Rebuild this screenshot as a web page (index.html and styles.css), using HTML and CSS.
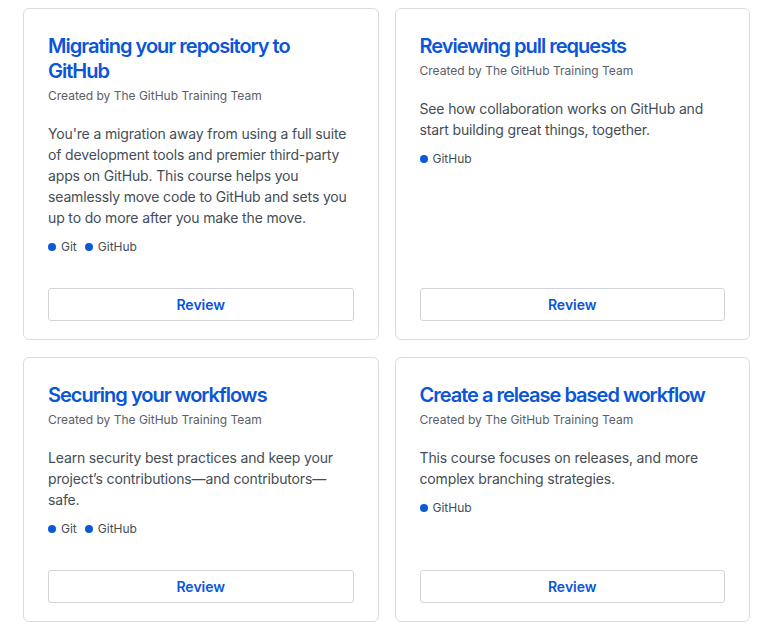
FILE: index.html
```html
<!DOCTYPE html>
<html lang="en">
<head>
<meta charset="utf-8">
<title>Courses</title>
<link rel="stylesheet" href="styles.css">
</head>
<body>
<div class="grid">
  <div class="card">
    <h3 class="title">Migrating your repository to GitHub</h3>
    <div class="author">Created by The GitHub Training Team</div>
    <p class="desc">You're a migration away from using a full suite of development tools and premier third-party apps on GitHub. This course helps you seamlessly move code to GitHub and sets you up to do more after you make the move.</p>
    <div class="tags"><span class="tag"><span class="dot"></span>Git</span><span class="tag"><span class="dot"></span>GitHub</span></div>
    <button class="btn">Review</button>
  </div>
  <div class="card">
    <h3 class="title">Reviewing pull requests</h3>
    <div class="author">Created by The GitHub Training Team</div>
    <p class="desc">See how collaboration works on GitHub and start building great things, together.</p>
    <div class="tags"><span class="tag"><span class="dot"></span>GitHub</span></div>
    <button class="btn">Review</button>
  </div>
  <div class="card">
    <h3 class="title">Securing your workflows</h3>
    <div class="author">Created by The GitHub Training Team</div>
    <p class="desc">Learn security best practices and keep your project’s contributions—and contributors—safe.</p>
    <div class="tags"><span class="tag"><span class="dot"></span>Git</span><span class="tag"><span class="dot"></span>GitHub</span></div>
    <button class="btn">Review</button>
  </div>
  <div class="card">
    <h3 class="title">Create a release based workflow</h3>
    <div class="author">Created by The GitHub Training Team</div>
    <p class="desc">This course focuses on releases, and more complex branching strategies.</p>
    <div class="tags"><span class="tag"><span class="dot"></span>GitHub</span></div>
    <button class="btn">Review</button>
  </div>
</div>
</body>
</html>
```
FILE: styles.css
```css
* { box-sizing: border-box; }
body {
  margin: 8px 28px 8px 23px;
  font-family: Inter, "Liberation Sans", Arial, sans-serif;
  background: #fff;
  color: #24292e;
}
.grid {
  display: grid;
  grid-template-columns: 1fr 1fr;
  column-gap: 16px;
  row-gap: 17px;
}
.card {
  display: flex;
  flex-direction: column;
  border: 1px solid #d8dce1;
  border-radius: 6px;
  padding: 25px 24px 18px;
}
.title {
  margin: 0;
  font-size: 20px;
  line-height: 25px;
  font-weight: 600;
  color: #0a55d8;
  letter-spacing: -1px;
}
.author {
  margin-top: 3px;
  font-size: 12px;
  line-height: 18px;
  color: #586069;
}
.desc {
  margin: 18px 0 0;
  font-size: 14px;
  line-height: 21px;
  color: #444d56;
  letter-spacing: -0.15px;
}
.tags {
  margin-top: 10px;
  margin-bottom: 32px;
  display: flex;
  gap: 8px;
  font-size: 12px;
  line-height: 18px;
  color: #444d56;
}
.tag {
  display: inline-flex;
  align-items: center;
}
.dot {
  width: 8px;
  height: 8px;
  border-radius: 50%;
  background: #0a5ad8;
  margin-right: 5px;
}
.btn {
  margin-top: auto;
  display: block;
  width: 100%;
  height: 33px;
  background: #fff;
  border: 1px solid #d1d5da;
  border-radius: 3px;
  font-family: inherit;
  font-size: 14px;
  font-weight: 600;
  color: #0a55d8;
}
```
